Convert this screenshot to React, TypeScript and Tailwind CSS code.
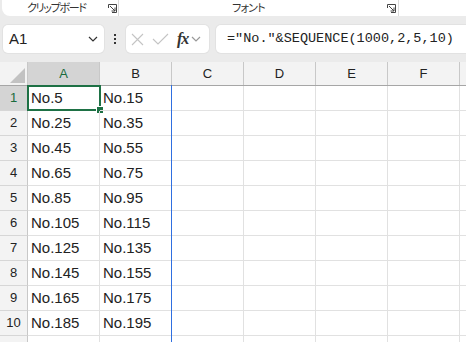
import type React from "react"

// 列と行のデータ
const columns = ["A", "B", "C", "D", "E", "F", "G"]
const rows = Array.from({ length: 11 }, (_, i) => i + 1)

const cellValue = (row: number, col: string) => {
  if (row > 10) return ""
  if (col === "A") return `No.${5 + (row - 1) * 20}`
  if (col === "B") return `No.${15 + (row - 1) * 20}`
  return ""
}

// リボンのダイアログ起動ツール
const Launcher = () => (
  <svg width="9" height="9" viewBox="0 0 9 9" fill="none" stroke="#444" strokeWidth="1">
    <path d="M0.5 4 V0.5 H8.5 M8.5 0.5 V8.5 H4" />
    <path d="M2 2 L7 7 M7 3.5 V7 H3.5" />
  </svg>
)

const Chevron = ({ color = "#333" }: { color?: string }) => (
  <svg width="10" height="6" viewBox="0 0 10 6" fill="none" stroke={color} strokeWidth="1.2">
    <path d="M1 1 L5 5 L9 1" />
  </svg>
)

const App: React.FC = () => {
  return (
    <div className="w-[466px] h-[342px] overflow-hidden bg-[#ebebeb] font-['Liberation_Sans','Noto_Sans_CJK_JP',sans-serif] text-[#222]">
      {/* リボン下部 */}
      <div className="ml-[2px] h-[16px] bg-white rounded-bl-[8px] flex text-[11px] leading-[14px] text-[#333] font-['Noto_Sans_CJK_JP',sans-serif] [font-feature-settings:'palt']">
        <div className="w-[117px] h-[16px] relative border-r border-[#dcdcdc]">
          <span className="absolute left-[25px] top-0 whitespace-nowrap tracking-[-1.3px]">クリップボード</span>
          <span className="absolute left-[106px] top-[4px]"><Launcher /></span>
        </div>
        <div className="w-[280px] h-[16px] relative border-r border-[#dcdcdc]">
          <span className="absolute left-[113px] top-0 whitespace-nowrap tracking-[-0.8px]">フォント</span>
          <span className="absolute left-[268px] top-[4px]"><Launcher /></span>
        </div>
      </div>

      {/* 数式バー */}
      <div className="flex items-center h-[28px] mt-[9px] pl-[3px]">
        <div className="w-[101px] h-[28px] bg-white rounded-[5px] shadow-[0_0_0_1px_#e2e2e2] flex items-center justify-between pl-[6px] pr-[6px]">
          <span className="text-[15px] text-[#222]">A1</span>
          <Chevron />
        </div>
        <div className="w-[22px] flex flex-col items-center gap-[2px]">
          <span className="w-[2px] h-[2px] bg-[#333]" />
          <span className="w-[2px] h-[2px] bg-[#333]" />
          <span className="w-[2px] h-[2px] bg-[#333]" />
        </div>
        <div className="w-[83px] h-[28px] bg-white rounded-[5px] shadow-[0_0_0_1px_#e2e2e2] flex items-center pl-[5px]">
          <svg width="13" height="13" viewBox="0 0 13 13" stroke="#c4c4c4" strokeWidth="1.1">
            <path d="M1 1 L12 12 M12 1 L1 12" />
          </svg>
          <svg className="ml-[8px]" width="17" height="12" viewBox="0 0 17 12" fill="none" stroke="#c4c4c4" strokeWidth="1.1">
            <path d="M1 6 L6 11 L16 1" />
          </svg>
          <span className="ml-[8px] text-[16px] italic font-['Liberation_Serif',serif] font-bold text-[#333] tracking-[-1px]">fx</span>
          <span className="ml-[3px]"><Chevron color="#999" /></span>
        </div>
        <div className="ml-[7px] flex-1 h-[28px] bg-white rounded-l-[5px] shadow-[0_0_0_1px_#e2e2e2] flex items-center pl-[11px] whitespace-nowrap">
          <span className="text-[13.5px] font-['Liberation_Mono',monospace] text-[#222]">="No."&amp;SEQUENCE(1000,2,5,10)</span>
        </div>
      </div>

      {/* シート */}
      <div className="mt-[9px] w-[532px] bg-white">
        {/* 列見出し */}
        <div className="flex h-[24px] bg-[#f3f3f3] border-b border-[#a6a6a6]">
          <div className="w-[28px] border-r border-[#c8c8c8] flex items-end justify-end">
            <div className="w-0 h-0 border-l-[15px] border-l-transparent border-b-[15px] border-b-[#c2c2c2] mr-[2px] mb-[2px]" />
          </div>
          {columns.map((c) => (
            <div
              key={c}
              className={`w-[72px] border-r border-[#c8c8c8] flex items-center justify-center text-[13px] ${
                c === "A" ? "bg-[#d4d4d4] text-[#1a6b3c]" : "text-[#222]"
              }`}
            >
              {c}
            </div>
          ))}
        </div>

        {/* 行 */}
        {rows.map((r) => (
          <div key={r} className="flex h-[25px]">
            <div
              className={`w-[28px] border-r border-b border-r-[#c8c8c8] border-b-[#d6d6d6] flex items-center justify-center text-[13px] ${
                r === 1 ? "bg-[#d4d4d4] text-[#1a6b3c]" : "bg-[#f3f3f3] text-[#222]"
              }`}
            >
              {r}
            </div>
            {columns.map((c) => (
              <div
                key={c}
                className="relative w-[72px] border-b border-r border-b-[#e1e1e1] border-r-[#e1e1e1] pl-[3px] text-[15px] leading-[24px]"
              >
                {cellValue(r, c)}
                {/* 改ページ線 */}
                {c === "B" && <div className="absolute -right-[1px] -top-[1px] w-[1px] h-[26px] bg-[#2f6fe0]" />}
                {r === 1 && c === "A" && (
                  <div className="absolute -left-[1px] -top-[1px] w-[74px] h-[26px] border-2 border-[#1e7145]">
                    <div className="absolute -right-[4px] -bottom-[4px] w-[6px] h-[6px] bg-[#1e7145] outline outline-1 outline-white" />
                  </div>
                )}
              </div>
            ))}
          </div>
        ))}
      </div>
    </div>
  )
}

export default App
